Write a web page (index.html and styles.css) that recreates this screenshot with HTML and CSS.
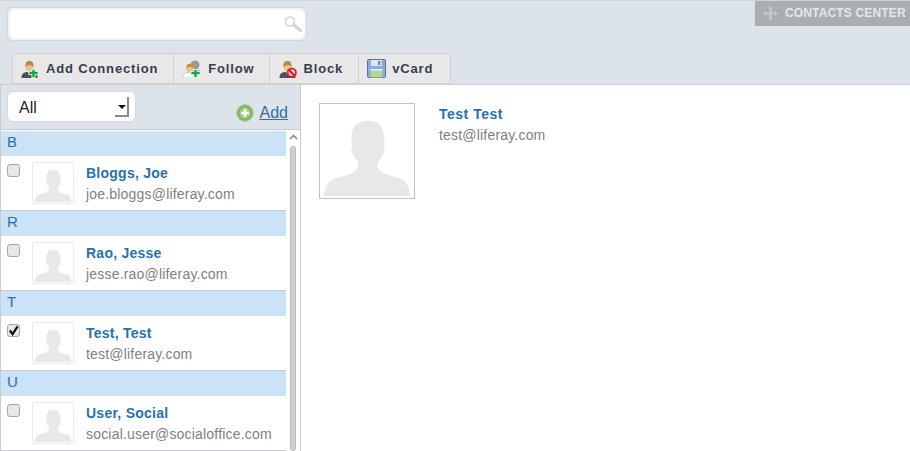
FILE: index.html
```html
<!DOCTYPE html>
<html lang="en">
<head>
<meta charset="utf-8">
<title>Contacts Center</title>
<link rel="stylesheet" href="styles.css">
</head>
<body>
<svg class="defs" width="0" height="0" aria-hidden="true">
  <symbol id="person" viewBox="0 0 96 96">
    <path d="M4 94 C5 86 8 79 13 77 C20 75 28 73 34 70 C38 68 40 64 39 60 C37 57 35 54 34 52 C32 50 31 46 33 44 C31 34 32 25 38 20 C44 16 54 16 60 20 C65 25 67 34 65 44 C67 46 66 50 64 52 C62 55 60 58 59 61 C58 65 60 68 64 70 C70 73 78 75 84 77 C89 79 91 86 92 94 Z" fill="#e8e8e8"/>
  </symbol>
  <symbol id="user-base" viewBox="0 0 18 18">
    <path d="M0.500 18 C0.500 14 2 13 5 12 L12 12 C15 13 16.500 14 16.500 18 Z" fill="#4d5258"/>
    <path d="M7 12 L8.500 15 L10 12 Z" fill="#f4f4f4"/>
    <ellipse cx="8.500" cy="7" rx="4" ry="4.800" fill="#ecc08f"/>
    <path d="M4.500 7 C4 2 6 1 8.500 1 C11 1 13 2 12.500 7 C11.500 4.500 6 4.500 4.500 7 Z" fill="#b78a3c"/>
  </symbol>
  <symbol id="plus-badge" viewBox="0 0 18 18">
    <path d="M10.500 9 H14.500 V11 H17.500 V15 H14.500 V18 H10.500 V15 H7.500 V11 H10.500 Z" fill="#fff"/>
    <path d="M11.300 9.800 H13.700 V11.800 H16.700 V14.200 H13.700 V17.200 H11.300 V14.200 H8.300 V11.800 H11.300 Z" fill="#12a64a"/>
  </symbol>
</svg>

<div class="header">
  <div class="search">
    <svg class="search-icon" width="20" height="18" viewBox="0 0 20 18"><circle cx="7" cy="6.500" r="4.500" fill="#fff" stroke="#ddd" stroke-width="2"/><path d="M11 10 L17.500 15.500" stroke="#d4d4d4" stroke-width="3" stroke-linecap="round"/></svg>
  </div>
  <div class="toolbar">
    <button class="tool tool-connect">
      <svg class="tool-icon" width="18" height="18"><use href="#user-base"/><use href="#plus-badge"/></svg>
      <span>Add Connection</span>
    </button>
    <button class="tool tool-follow">
      <svg class="tool-icon" width="18" height="18" viewBox="0 0 18 18"><circle cx="12" cy="5" r="4.500" fill="#9a9a9a"/><path d="M8 10 L17 10 L17 15 L8 15Z" fill="#aaa"/><path d="M0.500 18 C0.500 14 2 13 4 12.500 L10 12.500 C13 13 14 15 14 18 Z" fill="#fff" stroke="#bbb" stroke-width=".7"/><ellipse cx="7" cy="8.500" rx="3.600" ry="4" fill="#ecc08f"/><path d="M3.400 8.500 C3 4.500 5 3.800 7 3.800 C9 3.800 11 4.500 10.600 8.500 C9.500 6.500 5 6.500 3.400 8.500 Z" fill="#c4923c"/><use href="#plus-badge"/></svg>
      <span>Follow</span>
    </button>
    <button class="tool">
      <svg class="tool-icon" width="18" height="18" viewBox="0 0 18 18"><use href="#user-base"/><circle cx="12.800" cy="12.800" r="5" fill="#d3202d"/><circle cx="12.800" cy="12.800" r="3.300" fill="#f3c9cb"/><path d="M9.500 9.500 L16 16" stroke="#d3202d" stroke-width="2.200"/></svg>
      <span>Block</span>
    </button>
    <button class="tool tool-last">
      <svg class="tool-icon" width="19" height="19" viewBox="0 0 19 19"><rect x=".5" y=".5" width="18" height="18" rx="1" fill="#8aa9dd" stroke="#4d74b5"/><rect x="4" y="1" width="11" height="6" fill="#dfe7f5"/><rect x="11" y="2" width="2.500" height="4" fill="#6e8fc7"/><rect x="3.500" y="11" width="12" height="7.500" fill="#b4d49a"/><rect x="3.500" y="10" width="12" height="1.500" fill="#f0f3f8"/></svg>
      <span>vCard</span>
    </button>
  </div>
  <div class="badge">
    <svg class="badge-icon" width="15" height="15" viewBox="0 0 15 15"><path d="M7.500 0 L10 3 L8.500 3 L8.500 6.500 L12 6.500 L12 5 L15 7.500 L12 10 L12 8.500 L8.500 8.500 L8.500 12 L10 12 L7.500 15 L5 12 L6.500 12 L6.500 8.500 L3 8.500 L3 10 L0 7.500 L3 5 L3 6.500 L6.500 6.500 L6.500 3 L5 3 Z" fill="#c4c9cc"/></svg>
    CONTACTS CENTER
  </div>
</div>

<div class="main">
  <aside class="side">
    <div class="filter-row">
      <div class="select">
        <span class="select-label">All</span>
        <span class="select-arrow"></span>
      </div>
      <div class="add">
        <svg width="18" height="18" viewBox="0 0 18 18"><circle cx="9" cy="9" r="8.300" fill="#7dbb5e" stroke="#a5c88f" stroke-width=".8"/><circle cx="9" cy="9" r="5.500" fill="#9ccf7e"/><path d="M9 5 V13 M5 9 H13" stroke="#fff" stroke-width="2.600"/></svg>
        <a href="#" class="add-link">Add</a>
      </div>
    </div>
    <div class="list-wrap">
      <div class="list">
        <div class="letter">B</div>
        <div class="row">
          <span class="check"></span>
          <svg class="thumb" width="42" height="42"><use href="#person"/></svg>
          <div class="info"><div class="name">Bloggs, Joe</div><div class="email">joe.bloggs@liferay.com</div></div>
        </div>
        <div class="letter">R</div>
        <div class="row">
          <span class="check"></span>
          <svg class="thumb" width="42" height="42"><use href="#person"/></svg>
          <div class="info"><div class="name">Rao, Jesse</div><div class="email">jesse.rao@liferay.com</div></div>
        </div>
        <div class="letter">T</div>
        <div class="row">
          <span class="check checked"><svg width="11" height="11" viewBox="0 0 12 12"><path d="M2 6 L5 10 L10.500 1.500" fill="none" stroke="#111" stroke-width="2.400"/></svg></span>
          <svg class="thumb" width="42" height="42"><use href="#person"/></svg>
          <div class="info"><div class="name">Test, Test</div><div class="email">test@liferay.com</div></div>
        </div>
        <div class="letter">U</div>
        <div class="row">
          <span class="check"></span>
          <svg class="thumb" width="42" height="42"><use href="#person"/></svg>
          <div class="info"><div class="name">User, Social</div><div class="email">social.user@socialoffice.com</div></div>
        </div>
      </div>
      <div class="scrollbar">
        <svg class="scroll-up" width="9" height="6" viewBox="0 0 9 6"><path d="M1 5 L4.500 1.500 L8 5" fill="none" stroke="#8a8a8a" stroke-width="1.600"/></svg>
        <div class="scroll-thumb"></div>
      </div>
    </div>
  </aside>
  <section class="detail">
    <svg class="portrait" width="96" height="96"><use href="#person"/></svg>
    <div class="detail-info">
      <div class="name">Test Test</div>
      <div class="email">test@liferay.com</div>
    </div>
  </section>
</div>
</body>
</html>
```
FILE: styles.css
```css
* { box-sizing: border-box; }
html, body { margin: 0; height: 100%; overflow: hidden; }
body {
  background: #dde3eb;
  font-family: "Liberation Sans", Arial, sans-serif;
  font-size: 14px;
  border-top: 1px solid #ced4db;
}
.defs { position: absolute; }

.header { height: 83px; padding: 6px 0 0 7px; position: relative; }
.search {
  width: 300px; height: 34px;
  background: #fff;
  border: 1px solid #cfd5dc;
  border-radius: 6px;
  box-shadow: inset 0 0 4px #dcdcdc;
  display: flex; align-items: center; justify-content: flex-end;
  padding-right: 3px;
}
.toolbar {
  display: flex; width: max-content;
  margin: 12px 0 0 5px; height: 32px;
  background: #e8e8e8;
  border: 1px solid #d0d0d0;
  border-bottom: 2px solid #d0d0d0;
  border-radius: 4px 4px 0 0;
}
.tool {
  display: flex; align-items: center; gap: 7px;
  height: 100%;
  padding: 0 15px 0 9px;
  background: none;
  border: 0; border-right: 1px solid #cfcfcf;
  font: bold 13px "Liberation Sans", Arial, sans-serif;
  letter-spacing: .85px;
  color: #34404f;
}
.tool-connect { padding-left: 8px; }
.tool-follow { padding-right: 14px; }
.tool-last { border-right: 0; gap: 6px; padding: 0 17px 0 8px; }
.badge {
  position: absolute; top: -1px; right: 0;
  width: 155px; height: 26px;
  background: #a9aeb2;
  color: #e4e7ea;
  font-size: 12px; font-weight: bold;
  letter-spacing: .15px;
  display: flex; align-items: center; gap: 7px;
  padding-left: 8px;
}

.main { display: flex; height: 367px; }
.side {
  width: 301px;
  border: 1px solid #c8ccd0;
  border-bottom: 0;
  display: flex; flex-direction: column;
}
.filter-row {
  height: 45px;
  display: flex; justify-content: space-between;
  padding: 6px 12px 0 6px;
  border-bottom: 1px solid #c8ccd0;
}
.select {
  width: 129px; height: 31px;
  background: #fff;
  border: 1px solid #d2d8de;
  border-radius: 6px;
  padding-left: 11px;
  display: flex; align-items: center; justify-content: space-between;
  font-size: 16px; color: #222;
  position: relative;
}
.select-label { padding-top: 3px; }
.select-arrow {
  width: 14px; height: 20px; margin-right: 6px;
  border-right: 2px solid #8a8a8a; border-bottom: 2px solid #8a8a8a;
  position: relative;
}
.select-arrow::after {
  content: ""; position: absolute; left: 3px; top: 8px;
  border: 4px solid transparent; border-top: 4px solid #111; border-bottom: 0;
}
.add { display: flex; align-items: center; gap: 6px; margin-top: 4px; height: 36px; }
.add-link { color: #2a70ad; font-size: 16px; }

.list-wrap { flex: 1; display: flex; min-height: 0; background: #fff; }
.list { width: 285px; padding-top: 1px; }
.letter {
  height: 25px; background: #cbe3f6;
  color: #2a70ad; font-size: 15px;
  padding: 2px 0 0 6px;
}
.row {
  height: 55px;
  display: flex;
  padding: 6px 0 0 6px;
  border-bottom: 1px solid #c8ccd0;
  background: #fff;
}
.check {
  width: 13px; height: 13px; margin-top: 2px;
  border: 1px solid #a5a5a5; border-radius: 3px;
  background: #e7e7e7;
  display: flex; align-items: center; justify-content: center;
  flex: none;
}
.thumb { margin-left: 12px; border: 1px solid #ececec; flex: none; }
.info { margin-left: 12px; padding-top: 1px; }
.name { font-weight: bold; color: #2a70ad; font-size: 14px; line-height: 20px; letter-spacing: .25px; }
.email { color: #808080; font-size: 14px; line-height: 22px; letter-spacing: .19px; }
.scrollbar { width: 14px; position: relative; }
.scroll-up { position: absolute; left: 3px; top: 4px; }
.scroll-thumb {
  position: absolute; left: 4px; top: 16px; bottom: 0;
  width: 6px; background: #cfcfcf; border: 1px solid #bdbdbd; border-radius: 3px;
}

.detail {
  flex: 1; background: #fff;
  border-top: 1px solid #c8ccd0;
  display: flex; padding: 18px 0 0 18px;
}
.portrait { border: 1px solid #c2c2c2; flex: none; }
.detail-info { margin-left: 24px; padding-top: 1px; }
.detail-info .name { letter-spacing: .5px; }
```
